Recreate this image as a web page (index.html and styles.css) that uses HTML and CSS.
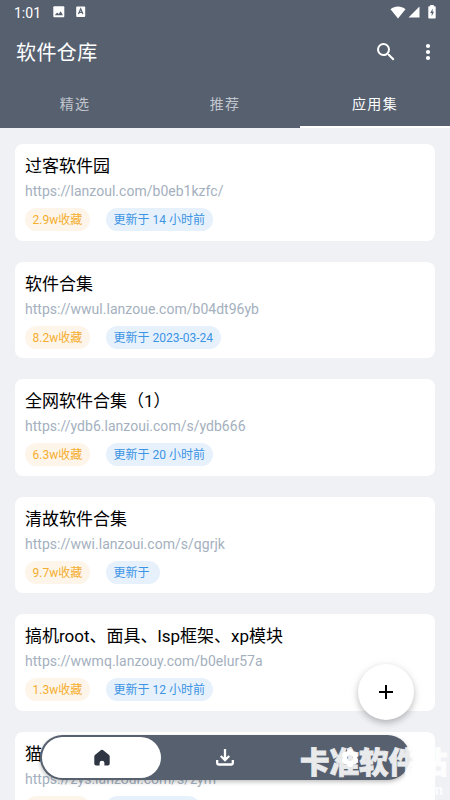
FILE: index.html
```html
<!DOCTYPE html>
<html lang="zh-CN">
<head>
<meta charset="utf-8">
<title>软件仓库</title>
<link rel="stylesheet" href="styles.css">
</head>
<body>
<div class="app">
  <header class="header">
    <div class="status">
      <span class="clock">1:01</span>
      <svg class="s-img" width="12" height="12" viewBox="0 0 12 12"><rect x=".3" y=".3" width="11" height="11" rx="1" fill="#fff"/><path d="M1.8 9.2 4.1 6.4 5.6 8 7.7 5.3 10 9.2z" fill="#57606f"/></svg>
      <svg class="s-a" width="10" height="12" viewBox="0 0 10 12"><rect x=".2" y=".5" width="9" height="10.5" rx="1" fill="#fff"/><path d="M2.5 8 4.7 2.8 6.9 8M3.3 6.3h2.8" fill="none" stroke="#57606f" stroke-width="1.2"/></svg>
      <span class="grow"></span>
      <svg width="16" height="13" viewBox="0 0 16 13"><path d="M.5 3.2C4.8-.4 11.200-.4 15.500 3.200L8 12.500z" fill="#fff"/></svg>
      <svg class="s-cell" width="12" height="12" viewBox="0 0 12 12"><path d="M11.500.500v11H.500z" fill="#fff"/></svg>
      <svg class="s-bat" width="8" height="14" viewBox="0 0 8 14"><path d="M2.200 0h3.600v1.300H7q.700 0 .700.700v10.800q0 .700-.700.700H1q-.700 0-.700-.700V2q0-.700.700-.700h1.200z" fill="#fff"/><path d="M4.800 3.500 2.200 8h1.500v3.300L6 6.700H4.500z" fill="#57606f"/></svg>
    </div>
    <div class="toolbar">
      <h1>软件仓库</h1>
      <svg class="search" width="24" height="24" viewBox="0 0 24 24"><path fill="#fff" d="M15.500 14h-.790l-.280-.270A6.470 6.470 0 0 0 16 9.500 6.500 6.500 0 1 0 9.500 16c1.610 0 3.090-.590 4.230-1.570l.270.280v.790l5 4.990L20.490 19l-4.990-5zm-6 0A4.500 4.500 0 1 1 14 9.500 4.500 4.500 0 0 1 9.500 14z"/></svg>
      <svg class="more" width="24" height="24" viewBox="0 0 24 24" fill="#fff"><circle cx="12" cy="6" r="2.100"/><circle cx="12" cy="12" r="2.100"/><circle cx="12" cy="18" r="2.100"/></svg>
    </div>
    <nav class="tabs"><span>精选</span><span>推荐</span><span class="active">应用集</span></nav>
  </header>
  <main class="list">
    <article class="card"><h2>过客软件园</h2><p>https://lanzoul.com/b0eb1kzfc/</p><div class="tags"><span class="fav">2.9w收藏</span><span class="upd">更新于 14 小时前</span></div></article>
    <article class="card"><h2>软件合集</h2><p>https://wwul.lanzoue.com/b04dt96yb</p><div class="tags"><span class="fav">8.2w收藏</span><span class="upd">更新于 2023-03-24</span></div></article>
    <article class="card"><h2>全网软件合集（1）</h2><p>https://ydb6.lanzoui.com/s/ydb666</p><div class="tags"><span class="fav">6.3w收藏</span><span class="upd">更新于 20 小时前</span></div></article>
    <article class="card"><h2>清故软件合集</h2><p>https://wwi.lanzoui.com/s/qgrjk</p><div class="tags"><span class="fav">9.7w收藏</span><span class="upd">更新于&nbsp;</span></div></article>
    <article class="card"><h2>搞机root、面具、lsp框架、xp模块</h2><p>https://wwmq.lanzouy.com/b0elur57a</p><div class="tags"><span class="fav">1.3w收藏</span><span class="upd">更新于 12 小时前</span></div></article>
    <article class="card last"><h2>猫</h2><p>https://zys.lanzoui.com/s/zym</p><div class="tags"><span class="fav"></span><span class="upd"></span></div></article>
  </main>
  <button class="fab" aria-label="添加"><svg width="24" height="24" viewBox="0 0 24 24"><path d="M12 5v14M5 12h14" stroke="#000" stroke-width="2"/></svg></button>
  <nav class="dock">
    <span class="dock-item selected"><svg width="20" height="20" viewBox="0 0 20 20"><path d="M9.100 2.100q.900-.700 1.800 0l5.900 4.700q.900.700.900 1.800v7.100q0 1.800-1.800 1.800h-3.500v-2.700q0-2-2.400-2t-2.400 2v2.700h-3.500q-1.800 0-1.800-1.800V8.600q0-1.100.900-1.800z" fill="#2f3542"/></svg></span>
    <span class="dock-item"><svg width="20" height="20" viewBox="0 0 20 20" fill="none" stroke="#fff" stroke-width="2.300"><path d="M10 1v11M5.800 8l4.200 4.200L14.200 8M2.200 12v3.200q0 1.300 1.300 1.300h13q1.300 0 1.300-1.300V12"/></svg></span>
    <span class="dock-item"><svg class="gear" width="20" height="20" viewBox="0 0 20 20"><path fill="#fff" fill-rule="evenodd" d="M7.500 2q2.500-1.800 5 0l.800 1.500 2 .100q2.700 1.400 2.700 4.400l-1 2 1 2q0 3-2.700 4.400l-2 .100-.800 1.500q-2.500 1.800-5 0l-.800-1.500-2-.100Q2 15 2 12l1-2-1-2q0-3 2.700-4.400l2-.100zM10 7a3 3 0 1 0 0 6 3 3 0 0 0 0-6z"/></svg></span>
  </nav>
  <div class="watermark"><span>卡准软件站</span><small>om</small></div>
</div>
</body>
</html>
```
FILE: styles.css
```css
* { box-sizing: border-box; }
body { margin: 0; font-family: Roboto, "Noto Sans CJK SC", sans-serif; }
h1, h2, p { margin: 0; font-weight: 400; }
svg { display: block; flex: none; }
.app { position: relative; width: 450px; height: 800px; overflow: hidden; background: #f0f1f5; }
.header { height: 128px; background: #57606f; color: #fff; }
.status { display: flex; align-items: center; height: 24px; padding: 0 14px; }
.clock { width: 39px; font-size: 14px; font-weight: 400; line-height: 22px; padding-top: 2px; }
.s-a { margin-left: 11px; }
.grow { flex: 1; }
.s-cell { margin-left: 2px; }
.s-bat { margin-left: 8px; }
.toolbar { display: flex; align-items: center; height: 56px; padding: 0 10px 0 16px; }
.toolbar h1 { flex: 1; padding-top: 2px; font-size: 20px; line-height: 54px; letter-spacing: .4px; }
.more { margin-left: 18px; }
.tabs { display: grid; grid-template-columns: repeat(3, 1fr); height: 48px; font-size: 14px; letter-spacing: 1.3px; line-height: 49px; text-align: center; color: #c1c6ce; }
.tabs .active { color: #fff; height: 48px; border-bottom: 2px solid #fff; }
.list { display: flex; flex-direction: column; gap: 21px; padding: 16px 15px; }
.card { flex: none; height: 96.500px; padding: 10px; border-radius: 8px; background: #fff; }
.card h2 { font-size: 17px; line-height: 24px; color: #000; white-space: nowrap; }
.card p { margin-top: 3px; font-size: 14px; line-height: 20px; letter-spacing: .02px; color: #a4b0be; }
.tags { display: flex; gap: 16px; margin-top: 7px; }
.tags span { height: 23px; padding: 0 7.600px; border-radius: 12px; font-size: 12px; line-height: 24px; white-space: nowrap; }
.tags .fav { color: #f5ae30; background: #fdf5e9; }
.tags .upd { color: #3b94e4; background: #e7f1fc; }
.last .fav { width: 65px; }
.last .upd { width: 94px; }
.fab { position: absolute; left: 358px; top: 664px; width: 56px; height: 56px; display: grid; place-items: center; padding: 0; border: 0; border-radius: 50%; background: #fff; box-shadow: 0 3px 6px rgba(0,0,0,.2), 0 2px 12px rgba(0,0,0,.08); }
.dock { position: absolute; left: 40px; top: 735px; width: 370px; height: 45px; display: grid; grid-template-columns: 119px 1fr 119px; padding: 2px; border-radius: 23px; background: #57606f; box-shadow: 0 2px 4px rgba(0,0,0,.25); }
.dock-item { display: grid; place-items: center; border-radius: 21px; }
.selected { background: #fff; }
.gear { margin-left: 3px; }
.watermark { position: absolute; left: 300px; top: 745px; width: 150px; color: #fff; opacity: .87; white-space: nowrap; }
.watermark span { display: block; font-size: 29.500px; font-weight: 900; line-height: 36px; -webkit-text-stroke: .8px #fff; }
.watermark small { display: block; margin: 1px 7px 0 0; font-size: 14px; font-weight: 700; line-height: 16px; text-align: right; }
```
